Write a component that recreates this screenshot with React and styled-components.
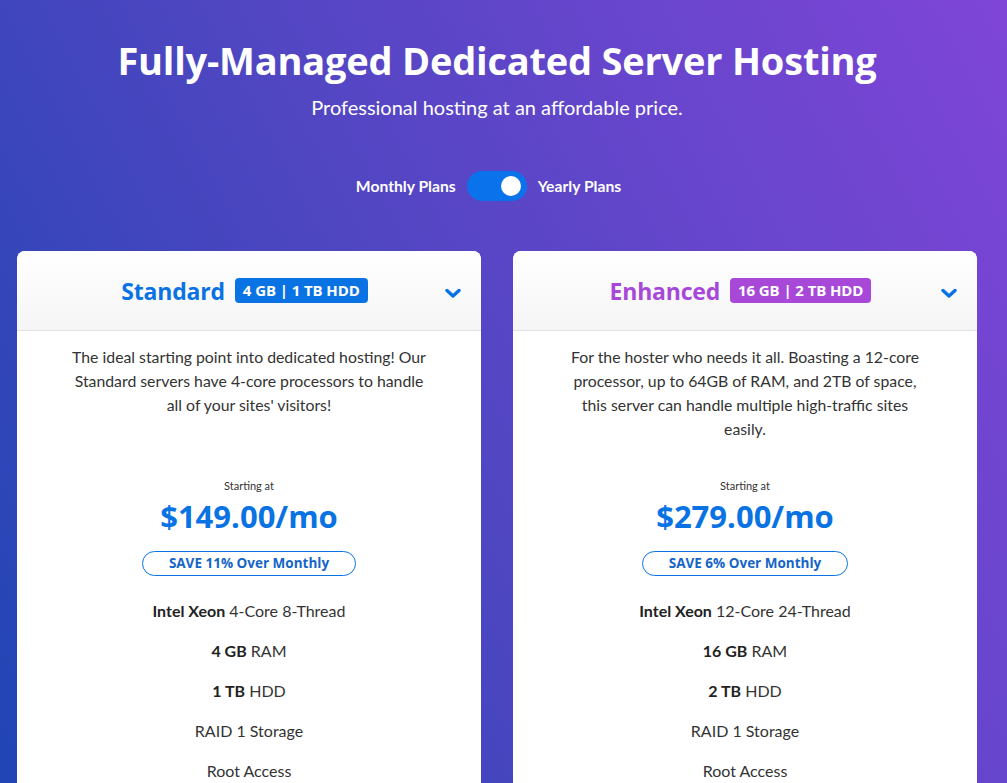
import React from "react";
import styled, { createGlobalStyle } from "styled-components";

const GlobalStyle = createGlobalStyle`
  html, body {
    margin: 0;
    padding: 0;
  }
  body {
    font-family: "Lato", "Open Sans", sans-serif;
    background: #5b44c6;
    overflow: hidden;
  }
`;

const plans = [
  {
    name: "Standard",
    color: "#0a73e4",
    badge: "4 GB | 1 TB HDD",
    desc: "The ideal starting point into dedicated hosting! Our Standard servers have 4-core processors to handle all of your sites' visitors!",
    price: "$149.00/mo",
    save: "SAVE 11% Over Monthly",
    features: [
      [<b key="b">Intel Xeon</b>, " 4-Core 8-Thread"],
      [<b key="b">4 GB</b>, " RAM"],
      [<b key="b">1 TB</b>, " HDD"],
      ["RAID 1 Storage"],
      ["Root Access"],
    ],
  },
  {
    name: "Enhanced",
    color: "#a748d9",
    badge: "16 GB | 2 TB HDD",
    desc: "For the hoster who needs it all. Boasting a 12-core processor, up to 64GB of RAM, and 2TB of space, this server can handle multiple high-traffic sites easily.",
    price: "$279.00/mo",
    save: "SAVE 6% Over Monthly",
    features: [
      [<b key="b">Intel Xeon</b>, " 12-Core 24-Thread"],
      [<b key="b">16 GB</b>, " RAM"],
      [<b key="b">2 TB</b>, " HDD"],
      ["RAID 1 Storage"],
      ["Root Access"],
    ],
  },
];

export default function App() {
  return (
    <>
      <GlobalStyle />
      <Page>
        <Hero>
          <Title>Fully-Managed Dedicated Server Hosting</Title>
          <Subtitle>Professional hosting at an affordable price.</Subtitle>
          <ToggleRow>
            <ToggleLabel>Monthly Plans</ToggleLabel>
            <Switch>
              <Knob />
            </Switch>
            <ToggleLabel>Yearly Plans</ToggleLabel>
          </ToggleRow>
        </Hero>

        <Cards>
          {plans.map((p) => (
            <Card key={p.name}>
              <CardHead>
                <PlanName color={p.color}>{p.name}</PlanName>
                <Badge color={p.color}>{p.badge}</Badge>
                <Chevron width="16" height="11" viewBox="0 0 16 11">
                  <path d="M2 2.5 L8 8 L14 2.5" fill="none" stroke="#0a73e4" strokeWidth="3.4" strokeLinecap="round" strokeLinejoin="round" />
                </Chevron>
              </CardHead>
              <CardBody>
                <Desc>{p.desc}</Desc>
                <Starting>Starting at</Starting>
                <Price>{p.price}</Price>
                <SavePill>{p.save}</SavePill>
                <Features>
                  {p.features.map((f, i) => (
                    <Feature key={i}>{f}</Feature>
                  ))}
                </Features>
              </CardBody>
            </Card>
          ))}
        </Cards>
      </Page>
    </>
  );
}

const Page = styled.div`
  width: 1007px;
  height: 783px;
  overflow: hidden;
  background: linear-gradient(62deg, #2045b4 0%, #5046c2 45%, #7f45d7 100%);
`;

const Hero = styled.div`
  display: flex;
  flex-direction: column;
  align-items: center;
  padding-top: 36px;
  padding-right: 13px;
`;

const Title = styled.h1`
  margin: 0;
  font-family: "Open Sans", sans-serif;
  font-weight: 700;
  font-size: 38px;
  line-height: 48px;
  color: #fff;
  letter-spacing: -0.2px;
`;

const Subtitle = styled.p`
  margin: 11px 0 0;
  font-family: "Lato", sans-serif;
  font-size: 20px;
  line-height: 24px;
  color: #fff;
`;

const ToggleRow = styled.div`
  display: flex;
  align-items: center;
  gap: 11px;
  margin-top: 52px;
  margin-right: 17px;
`;

const ToggleLabel = styled.span`
  font-family: "Lato", sans-serif;
  font-weight: 700;
  font-size: 15.7px;
  color: #fff;
`;

const Switch = styled.div`
  width: 60px;
  height: 30px;
  border-radius: 15px;
  background: #0a73ec;
  display: flex;
  align-items: center;
  justify-content: flex-end;
  padding: 0 6px;
  box-sizing: border-box;
`;

const Knob = styled.div`
  width: 20px;
  height: 20px;
  border-radius: 50%;
  background: #fff;
`;

const Cards = styled.div`
  display: grid;
  grid-template-columns: 464px 464px;
  gap: 32px;
  padding-left: 17px;
  margin-top: 50px;
`;

const Card = styled.div`
  background: #fff;
  border-radius: 8px 8px 0 0;
  height: 560px;
  overflow: hidden;
`;

const CardHead = styled.div`
  position: relative;
  height: 79px;
  display: flex;
  align-items: center;
  justify-content: center;
  gap: 10px;
  padding-right: 9px;
  background: linear-gradient(#ffffff, #f5f5f5);
  border-bottom: 1px solid #e2e2e2;
`;

const PlanName = styled.span`
  font-family: "Open Sans", sans-serif;
  font-weight: 700;
  font-size: 23px;
  color: ${(p) => p.color};
  letter-spacing: -0.2px;
`;

const Badge = styled.span`
  background: ${(p) => p.color};
  color: #fff;
  font-family: "Open Sans", sans-serif;
  font-weight: 700;
  font-size: 15px;
  line-height: 25px;
  padding: 0 8px;
  border-radius: 4px;
  letter-spacing: -0.1px;
`;

const Chevron = styled.svg`
  position: absolute;
  right: 20px;
  top: 37px;
`;

const CardBody = styled.div`
  display: flex;
  flex-direction: column;
  align-items: center;
  padding: 14px 0 0;
`;

const Desc = styled.p`
  margin: 0;
  width: 360px;
  min-height: 96px;
  text-align: center;
  font-size: 15.8px;
  line-height: 24px;
  color: #333;
`;

const Starting = styled.div`
  margin-top: 37px;
  font-size: 11px;
  line-height: 16px;
  color: #333;
`;

const Price = styled.div`
  margin-top: 3px;
  font-family: "Open Sans", sans-serif;
  font-weight: 700;
  font-size: 31px;
  line-height: 38px;
  color: #0a73e4;
`;

const SavePill = styled.div`
  margin-top: 16px;
  height: 25px;
  box-sizing: border-box;
  border: 1px solid #0a73e4;
  border-radius: 13px;
  padding: 0 26px;
  font-family: "Open Sans", sans-serif;
  font-weight: 700;
  font-size: 13.5px;
  line-height: 23px;
  color: #1565c8;
`;

const Features = styled.ul`
  list-style: none;
  margin: 15px 0 0;
  padding: 0;
`;

const Feature = styled.li`
  text-align: center;
  font-size: 16px;
  line-height: 40px;
  color: #333;
  b {
    color: #222;
    font-weight: 700;
  }
`;
